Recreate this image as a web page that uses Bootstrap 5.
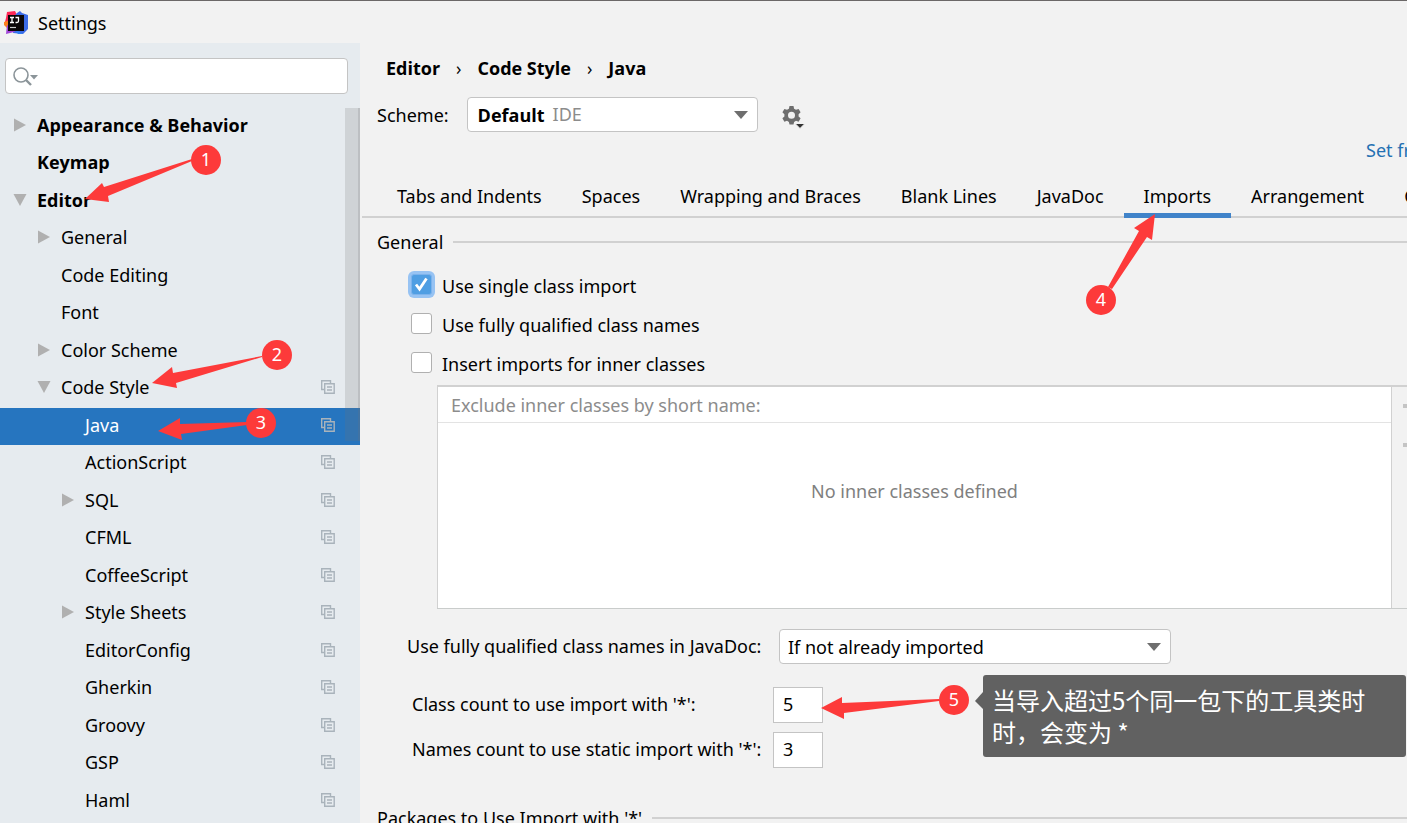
<!DOCTYPE html>
<html lang="en">
<head>
<meta charset="utf-8">
<meta name="viewport" content="width=device-width, initial-scale=1">
<title>Settings</title>
<link href="https://cdn.jsdelivr.net/npm/bootstrap@5.3.0/dist/css/bootstrap.min.css" rel="stylesheet">
<style>
body{font-family:"Noto Sans","Noto Sans CJK SC",sans-serif;font-size:18px;line-height:24px;color:#000;background:#f2f2f2}
.strong{font-family:"Open Sans","Noto Sans",sans-serif;font-weight:700}
.window{height:100vh;border-top:1px solid #6b6868}
.titlebar{height:42px;padding:2px 4px 0;gap:10px}
.titlebar h1{font-size:18px;line-height:24px}

/* settings tree */
.sidebar{width:360px;background:#e6ebef}
.search-wrap{padding:15px 12px 14px 5px}
.search-box{height:36px;border:1px solid #c4c4c4;border-radius:4px;background:#fff;padding:2px 7px 0}
.search-box input{outline:0}
.tree li{height:38px}
.tree li:nth-child(odd){height:37px}
.tree a{color:#000;text-decoration:none;padding:0 25px 4px 13px}
.tree .twist{width:24px}
.tree .lvl1{padding-left:37px}
.tree .lvl2{padding-left:61px}
.tree .chosen{background:#2675bf;color:#fff}
.scroll-thumb{width:15px;height:333px;background:rgba(115,115,115,.2);border-right:2px solid rgba(115,115,115,.2)}

/* right-hand page */
.crumbs{padding:13px 26px 0;gap:16px}
.crumbs a{color:#000;text-decoration:none}
.scheme{padding:17px 17px 0;gap:18px}
.combo{height:35px;border:1px solid #c4c4c4;border-radius:4px;color:#000;background:#fff url("data:image/svg+xml,%3Csvg xmlns='http://www.w3.org/2000/svg' width='14' height='8'%3E%3Cpath d='M0 0h14l-7 8z' fill='%236e6e6e'/%3E%3C/svg%3E") no-repeat right 9px center;appearance:none;padding:0 8px}
.scheme .combo{width:291px;padding-left:10px}
.scheme-kind{left:86px;top:5px;color:#8c8c8c;pointer-events:none}
.gear{margin-left:6px}
.set-from{padding:6px 0 0 1006px}
.set-from a{color:#2470b3;text-decoration:none}
.tabs{margin-left:2px;padding-left:15px;border-bottom:2px solid #d1d1d1;margin-top:19px;height:37px}
.tabs button{padding:0 20px 2px;height:37px;border-bottom:5px solid transparent!important}
.tabs .current{border-bottom-color:#4083c9!important}
.rule{height:2px;background:#d1d1d1}
.group-title{padding-left:17px;gap:10px}
.checks{padding:20px 0 0 51px;gap:15px}
.checks label{gap:10px;height:24px}
.checks input{appearance:none;width:21px;height:21px;border:1px solid #b0b0b0;border-radius:3px;background:#fff;margin:0 0 4px}
.checks input:checked{border-color:#7db3ec;box-shadow:0 0 0 3px #97c3f3;background:#4f9ee3 url("data:image/svg+xml,%3Csvg xmlns='http://www.w3.org/2000/svg' viewBox='0 0 19 19'%3E%3Cpath d='M4 9.500l3.500 4.500L14.500 3.500' fill='none' stroke='white' stroke-width='2.800'/%3E%3C/svg%3E") center/19px no-repeat}
.exclude{margin:9px 0 0 77px;border-top:2px solid #d1d1d1;border-bottom:1px solid #c9cccb;height:224px}
.exclude-list{border:solid #d1d1d1;border-width:0 1px;background:#fff}
.exclude-head{height:36px;padding:6px 13px;border-bottom:1px solid #e3e3e3;color:#8c8c8c}
.exclude-empty{padding-top:56px;color:#808080}
.exclude-tools{width:15px;padding:17px 0;gap:35px}
.exclude-tools button{width:4px;height:4px;background:#c4c4c4}
.javadoc{padding:20px 0 0 47px}
.javadoc .combo{width:392px}
.javadoc label{width:372px;padding-bottom:2px}
.counts{padding:23px 0 0 52px;gap:9px}
.counts label{width:361px;padding-bottom:2px}
.counts input{width:50px;height:36px;border:1px solid #c4c4c4;padding:0 0 2px 9px;outline:0}
.packages{margin-top:38px}

/* numbered notes drawn over the window */
.notes{left:0;top:0;pointer-events:none}
.note-text{left:983px;top:674px;width:423px;height:82px;padding:9px;background:#616161;color:#fff;border-radius:3px;font-family:"Noto Sans CJK SC",sans-serif;font-size:24px;line-height:32px}
</style>
</head>
<body class="overflow-hidden">
<svg class="d-none">
  <symbol id="closed" viewBox="0 0 14 14"><path d="M1 0.500v13L13 7z" fill="#b0b0b0"/></symbol>
  <symbol id="open" viewBox="0 0 14 14"><path d="M.5 1h13L7 13z" fill="#b0b0b0"/></symbol>
  <symbol id="copy" viewBox="0 0 14 14"><path d="M3.500 9.500H.7V.7h8.800V3.500M3.700 3.700h9.500v9.500H3.700zM6 7h5M6 10h5" fill="none" stroke="#a9b3bb" stroke-width="1.400"/></symbol>
</svg>
<div class="window d-flex flex-column position-relative overflow-hidden">
  <header class="titlebar d-flex align-items-center flex-shrink-0">
    <svg width="24" height="24" viewBox="0 0 24 24" aria-hidden="true">
      <path d="M3 1l8-1 3 6-7 9-6-4 1-4z" fill="#fe2857"/><path d="M0 11l6-2 2 6-4 3-4-4z" fill="#fc801d"/><path d="M11 4l2-2 3-2 2 2 6 2v14l-5 5-10-1z" fill="#3b6be8"/><path d="M3 14l10 5-3 2-8 2z" fill="#a145d8"/><path d="M10 18l9 5-5 0z" fill="#2f7df0"/>
      <path d="M4 4h16v16H4z" fill="#0b0708"/><path d="M6 6.500h4M8 6.500v5M6 11.500h4M11.500 6.500h3v3.500q0 1.500-1.500 1.500h-1.500" fill="none" stroke="#fff" stroke-width="1.300"/><path d="M6 16.500h6" stroke="#ccc" stroke-width="1.200"/>
    </svg>
    <h1 class="m-0 fw-normal">Settings</h1>
  </header>
  <div class="d-flex flex-grow-1 overflow-hidden">
    <nav class="sidebar flex-shrink-0" aria-label="Settings">
      <div class="search-wrap">
        <div class="search-box d-flex align-items-center">
          <svg width="26" height="20" viewBox="0 0 26 20" aria-hidden="true"><circle cx="8" cy="8" r="7" fill="none" stroke="#8b9499" stroke-width="1.600"/><path d="M13 13l5 5" stroke="#8b9499" stroke-width="2.400"/><path d="M17 8h8l-4 4.500z" fill="#8b9499"/></svg>
          <input class="border-0 flex-grow-1" type="text" aria-label="Search settings">
        </div>
      </div>
      <div class="position-relative">
        <ul class="tree list-unstyled m-0">
          <li><a class="strong h-100 d-flex align-items-center" href="#"><span class="twist d-flex"><svg width="14" height="14"><use href="#closed"/></svg></span>Appearance &amp; Behavior</a></li>
          <li><a class="strong h-100 d-flex align-items-center" href="#"><span class="twist"></span>Keymap</a></li>
          <li><a class="strong h-100 d-flex align-items-center" href="#"><span class="twist d-flex"><svg width="14" height="14"><use href="#open"/></svg></span>Editor</a></li>
          <li><a class="lvl1 h-100 d-flex align-items-center" href="#"><span class="twist d-flex"><svg width="14" height="14"><use href="#closed"/></svg></span>General</a></li>
          <li><a class="lvl1 h-100 d-flex align-items-center" href="#"><span class="twist"></span>Code Editing</a></li>
          <li><a class="lvl1 h-100 d-flex align-items-center" href="#"><span class="twist"></span>Font</a></li>
          <li><a class="lvl1 h-100 d-flex align-items-center" href="#"><span class="twist d-flex"><svg width="14" height="14"><use href="#closed"/></svg></span>Color Scheme</a></li>
          <li><a class="lvl1 h-100 d-flex align-items-center" href="#"><span class="twist d-flex"><svg width="14" height="14"><use href="#open"/></svg></span>Code Style<svg class="ms-auto" width="14" height="14"><use href="#copy"/></svg></a></li>
          <li><a class="lvl2 chosen h-100 d-flex align-items-center" href="#" aria-current="page"><span class="twist"></span>Java<svg class="ms-auto" width="14" height="14"><use href="#copy"/></svg></a></li>
          <li><a class="lvl2 h-100 d-flex align-items-center" href="#"><span class="twist"></span>ActionScript<svg class="ms-auto" width="14" height="14"><use href="#copy"/></svg></a></li>
          <li><a class="lvl2 h-100 d-flex align-items-center" href="#"><span class="twist d-flex"><svg width="14" height="14"><use href="#closed"/></svg></span>SQL<svg class="ms-auto" width="14" height="14"><use href="#copy"/></svg></a></li>
          <li><a class="lvl2 h-100 d-flex align-items-center" href="#"><span class="twist"></span>CFML<svg class="ms-auto" width="14" height="14"><use href="#copy"/></svg></a></li>
          <li><a class="lvl2 h-100 d-flex align-items-center" href="#"><span class="twist"></span>CoffeeScript<svg class="ms-auto" width="14" height="14"><use href="#copy"/></svg></a></li>
          <li><a class="lvl2 h-100 d-flex align-items-center" href="#"><span class="twist d-flex"><svg width="14" height="14"><use href="#closed"/></svg></span>Style Sheets<svg class="ms-auto" width="14" height="14"><use href="#copy"/></svg></a></li>
          <li><a class="lvl2 h-100 d-flex align-items-center" href="#"><span class="twist"></span>EditorConfig<svg class="ms-auto" width="14" height="14"><use href="#copy"/></svg></a></li>
          <li><a class="lvl2 h-100 d-flex align-items-center" href="#"><span class="twist"></span>Gherkin<svg class="ms-auto" width="14" height="14"><use href="#copy"/></svg></a></li>
          <li><a class="lvl2 h-100 d-flex align-items-center" href="#"><span class="twist"></span>Groovy<svg class="ms-auto" width="14" height="14"><use href="#copy"/></svg></a></li>
          <li><a class="lvl2 h-100 d-flex align-items-center" href="#"><span class="twist"></span>GSP<svg class="ms-auto" width="14" height="14"><use href="#copy"/></svg></a></li>
          <li><a class="lvl2 h-100 d-flex align-items-center" href="#"><span class="twist"></span>Haml<svg class="ms-auto" width="14" height="14"><use href="#copy"/></svg></a></li>
        </ul>
        <div class="scroll-thumb position-absolute top-0 end-0"></div>
      </div>
    </nav>
    <main class="flex-grow-1 overflow-hidden">
      <div class="crumbs strong d-flex">
        <a href="#">Editor</a><span class="fw-normal">›</span><a href="#">Code Style</a><span class="fw-normal">›</span><a href="#">Java</a>
      </div>
      <div class="scheme d-flex align-items-center">
        <label for="scheme">Scheme:</label>
        <div class="position-relative">
          <select class="combo strong d-block" id="scheme"><option>Default</option></select>
          <span class="scheme-kind position-absolute">IDE</span>
        </div>
        <button class="gear border-0 bg-transparent p-0 pt-1 d-flex" type="button" aria-label="Scheme actions">
          <svg width="24" height="24" viewBox="0 0 24 24"><path d="M7.500 1h4l.6 2.700 1.900 1.100 2.600-.9 2 3.400-2 1.900v2.200l2 1.900-2 3.400-2.600-.9-1.900 1.100-.6 2.700h-4l-.6-2.700L5 15.800l-2.600.9-2-3.400 2-1.900V9.200l-2-1.900 2-3.400 2.600.9 1.900-1.100zM9.500 6.800a3.500 3.500 0 1 0 0 7 3.500 3.500 0 0 0 0-7z" fill="#6e6e6e" fill-rule="evenodd"/><path d="M13 18.500h10l-5 5z" fill="#333" stroke="#f2f2f2" stroke-width="1"/></svg>
        </button>
      </div>
      <div class="set-from text-nowrap"><a href="#">Set from...</a></div>
      <div class="tabs d-flex text-nowrap" role="tablist">
        <button class="border-0 bg-transparent flex-shrink-0" type="button" role="tab">Tabs and Indents</button>
        <button class="border-0 bg-transparent flex-shrink-0" type="button" role="tab">Spaces</button>
        <button class="border-0 bg-transparent flex-shrink-0" type="button" role="tab">Wrapping and Braces</button>
        <button class="border-0 bg-transparent flex-shrink-0" type="button" role="tab">Blank Lines</button>
        <button class="border-0 bg-transparent flex-shrink-0" type="button" role="tab">JavaDoc</button>
        <button class="current border-0 bg-transparent flex-shrink-0" type="button" role="tab" aria-selected="true">Imports</button>
        <button class="border-0 bg-transparent flex-shrink-0" type="button" role="tab">Arrangement</button>
        <button class="border-0 bg-transparent flex-shrink-0" type="button" role="tab">Code Generation</button>
      </div>
      <div class="group-title d-flex align-items-center mt-2 pt-1">General<div class="rule flex-grow-1"></div></div>
      <div class="checks d-flex flex-column">
        <label class="d-flex align-items-center"><input type="checkbox" checked>Use single class import</label>
        <label class="d-flex align-items-center"><input type="checkbox">Use fully qualified class names</label>
        <label class="d-flex align-items-center"><input type="checkbox">Insert imports for inner classes</label>
      </div>
      <div class="exclude d-flex">
        <div class="exclude-list flex-grow-1">
          <div class="exclude-head">Exclude inner classes by short name:</div>
          <div class="exclude-empty text-center">No inner classes defined</div>
        </div>
        <div class="exclude-tools d-flex flex-column align-items-end flex-shrink-0">
          <button class="border-0 p-0" type="button" aria-label="Add"></button>
          <button class="border-0 p-0" type="button" aria-label="Remove"></button>
        </div>
      </div>
      <div class="javadoc d-flex align-items-center">
        <label for="fqn">Use fully qualified class names in JavaDoc:</label>
        <select class="combo" id="fqn"><option>If not already imported</option></select>
      </div>
      <div class="counts d-flex flex-column">
        <div class="d-flex align-items-center"><label for="classes">Class count to use import with '*':</label><input id="classes" type="text" value="5"></div>
        <div class="d-flex align-items-center"><label for="names">Names count to use static import with '*':</label><input id="names" type="text" value="3"></div>
      </div>
      <div class="packages group-title d-flex align-items-center">Packages to Use Import with '*'<div class="rule flex-grow-1"></div></div>
    </main>
  </div>
  <svg class="notes position-absolute" width="1407" height="822" viewBox="0 1 1407 822" fill="#fd3a3a">
    <path d="M85 199l17-16 2 4 88-28v2l-84 35 1 6z"/>
    <path d="M152 383l20-16 1 6 89-17v1l-86 26 1 5z"/>
    <path d="M158 431l22-13v6l67-2v3l-66 9 1 6z"/>
    <path d="M1155 214l-21 14 5 3-31 56 4 2 35-52 5 3z"/>
    <path d="M821 708l21-11v6l97-4v2l-95 12v6z"/>
    <path d="M983 692v17l-8-8z" fill="#616161"/>
    <circle cx="206" cy="160" r="15"/><circle cx="277" cy="355" r="15"/><circle cx="261" cy="423" r="15"/><circle cx="1101" cy="300" r="15"/><circle cx="954" cy="700" r="15"/>
    <g fill="#fff" font-size="18" text-anchor="middle"><text x="206" y="166">1</text><text x="277" y="361">2</text><text x="261" y="429">3</text><text x="1101" y="306">4</text><text x="954" y="706">5</text></g>
  </svg>
  <div class="note-text position-absolute" lang="zh-CN">当导入超过5个同一包下的工具类时<br>时，会变为 *</div>
</div>
<script src="https://cdn.jsdelivr.net/npm/bootstrap@5.3.0/dist/js/bootstrap.bundle.min.js"></script>
</body>
</html>
